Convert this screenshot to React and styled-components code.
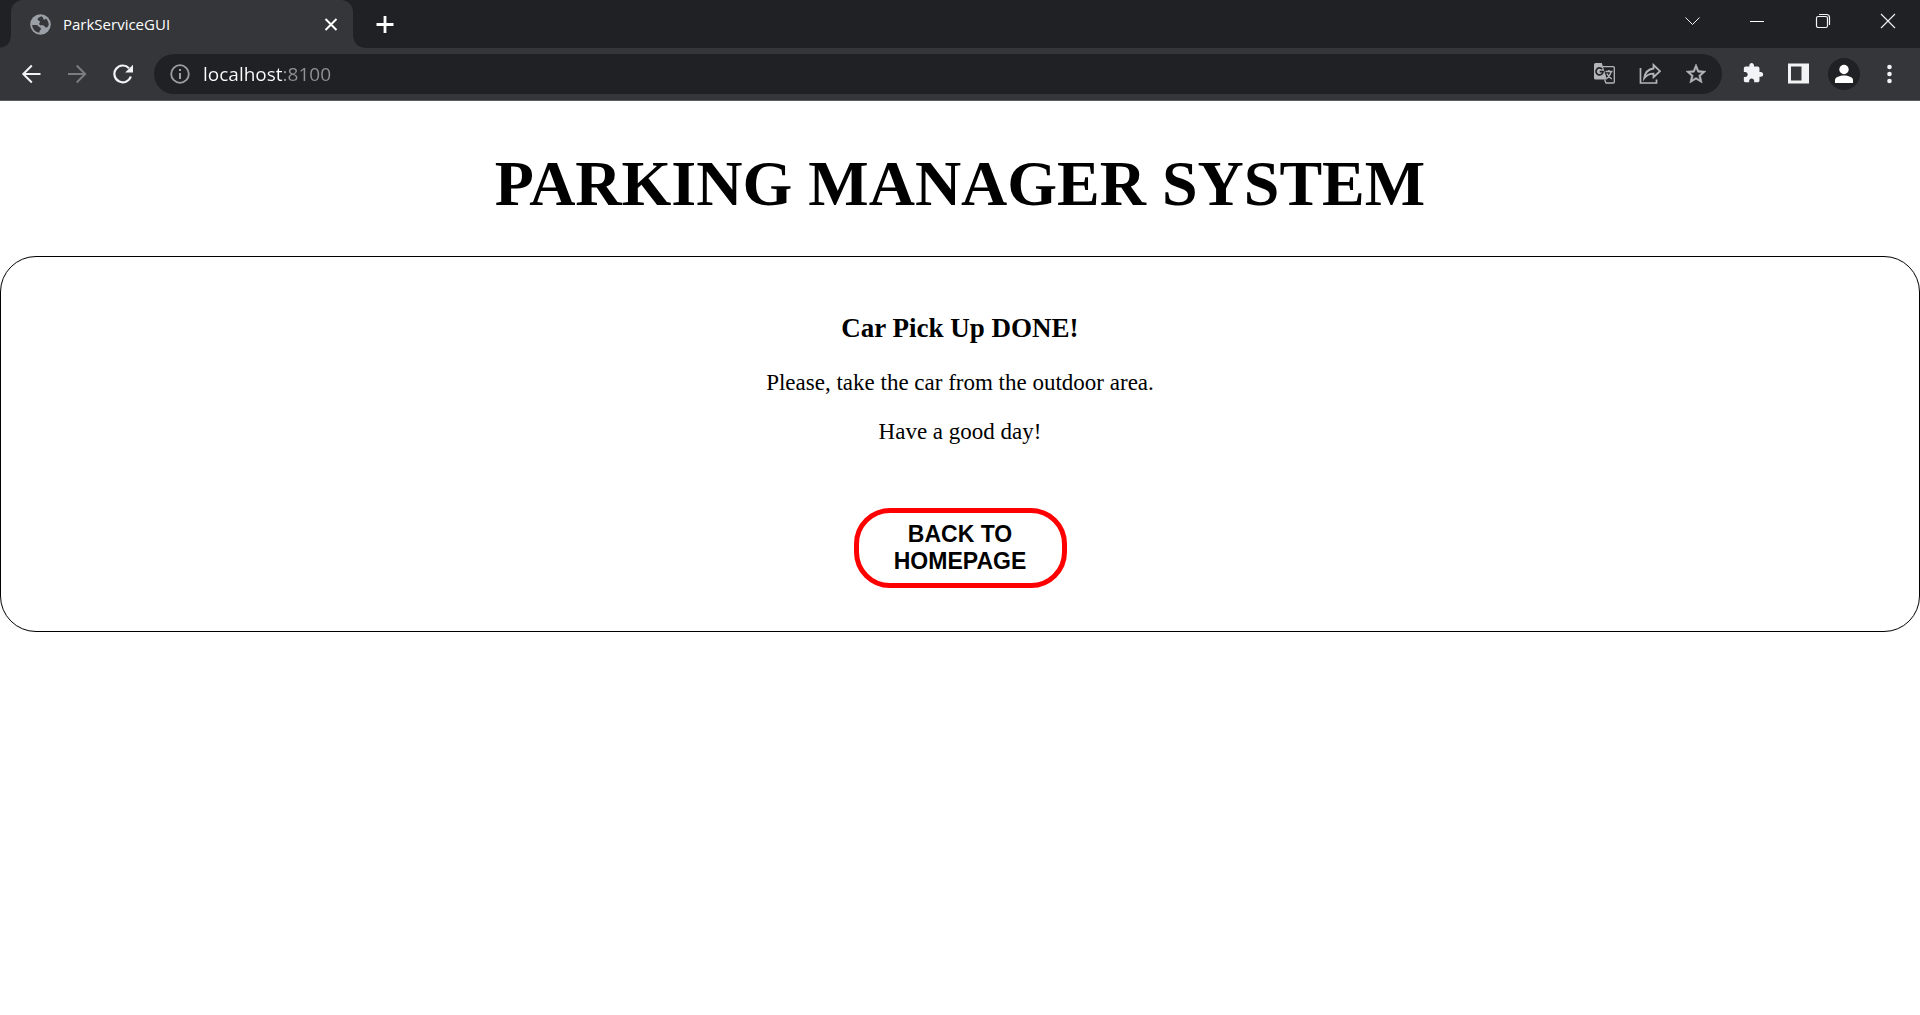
import React from "react";
import styled, { createGlobalStyle } from "styled-components";

const GlobalStyle = createGlobalStyle`
  *, *::before, *::after { box-sizing: border-box; }
  body { margin: 0; background: #fff; color: #000; font-family: "Liberation Serif", "Times New Roman", serif; }
  button, input { font: inherit; color: inherit; margin: 0; padding: 0; border: 0; background: none; }
`;

const chromeFont = `"Open Sans", "Segoe UI", sans-serif`;

const TabStrip = styled.header`
  display: flex;
  align-items: stretch;
  height: 48px;
  padding-left: 11px;
  background: #202124;
  font-family: ${chromeFont};
`;

const Tab = styled.div`
  position: relative;
  display: flex;
  align-items: center;
  width: 342px;
  padding: 0 12px 0 19px;
  gap: 12px;
  border-radius: 12px 12px 0 0;
  background: #35363a;
  color: #fff;

  &::before, &::after {
    content: "";
    position: absolute;
    bottom: 0;
    width: 11px;
    height: 11px;
  }
  &::before {
    right: 100%;
    background: radial-gradient(circle at 0 0, transparent 10px, #35363a 11px);
  }
  &::after {
    left: 100%;
    background: radial-gradient(circle at 100% 0, transparent 10px, #35363a 11px);
  }
`;

const TabTitle = styled.span`
  flex: 1;
  font-size: 15px;
  line-height: 20px;
`;

const IconButton = styled.button`
  display: flex;
  align-items: center;
  justify-content: center;
  flex: none;
  width: ${(p) => p.$width}px;
  height: ${(p) => p.$height || 40}px;
  color: ${(p) => p.$color || "#f1f3f4"};
`;

const WindowControls = styled.div`
  display: flex;
  margin-left: auto;
`;

const Toolbar = styled.nav`
  display: flex;
  align-items: center;
  height: 53px;
  padding: 0 9px 1px 8px;
  border-bottom: 1px solid #5b5c5f;
  background: #35363a;
  font-family: ${chromeFont};
`;

const AddressBar = styled.div`
  display: flex;
  align-items: center;
  flex: 1;
  height: 40px;
  margin: 0 9px 0 8px;
  padding: 0 3px;
  border-radius: 20px;
  background: #202124;
`;

const AddressInput = styled.input`
  flex: 1;
  min-width: 0;
  height: 40px;
  font-size: 19px;
  color: #fff;
  outline: 0;
  background: linear-gradient(to right, #fff 80px, #8f9296 80px);
  background-clip: text;
  -webkit-text-fill-color: transparent;
`;

const Avatar = styled.span`
  display: flex;
  align-items: center;
  justify-content: center;
  width: 32px;
  height: 32px;
  border-radius: 50%;
  background: #202124;
`;

const Title = styled.h1`
  margin: 0;
  padding: 46px 0 35px;
  font-size: 64px;
  line-height: 74px;
  text-align: center;
`;

const Card = styled.main`
  display: flex;
  flex-direction: column;
  align-items: center;
  padding: 56px 0 43px;
  border: 1px solid #000;
  border-radius: 36px;
  text-align: center;
`;

const Heading = styled.h2`
  margin: 0 0 26px;
  font-size: 27px;
  line-height: 31px;
`;

const Message = styled.p`
  margin: 0 0 23px;
  font-size: 23px;
  line-height: 26px;
`;

const HomeButton = styled.button`
  width: 213px;
  margin-top: 40px;
  padding: 8px 24px;
  border: 5px solid #f00;
  border-radius: 36px;
  background: #fff;
  font-family: "Liberation Sans", Arial, sans-serif;
  font-size: 23px;
  font-weight: 700;
  line-height: 27px;
`;

const Icon = ({ size, box = 24, children }) => (
  <svg width={size} height={size} viewBox={`0 0 ${box} ${box}`} fill="none" aria-hidden="true">
    {children}
  </svg>
);

const Globe = () => (
  <Icon size={21} box={21}>
    <circle cx="10.5" cy="10.5" r="10.3" fill="#9aa0a6" />
    <path d="M11.5 2.2C9.3 3 7.3 4.2 7.6 5.6C7.9 6.9 9.7 6.4 9.9 7.7C10.1 9 8.7 9.4 9.3 10.6C10 11.8 12.3 10.9 13.6 11.4C15 12 14.7 13.4 16 13.6C17.2 13.8 18 12.6 18.7 11C18.8 8.6 17.7 6.4 16 4.6C15.2 5.7 14 6 13.5 5.2C13 4.3 13.3 3 11.5 2.2Z" fill="#35363a" />
    <path d="M2.2 10.8C2.2 14.9 5 18 9.2 18.8C9.7 17.8 9.5 16.9 10.4 16.1C11.4 15.1 11.1 13.6 9.7 13.3C8.3 13 8.3 11.6 6.7 11.1C5.3 10.7 3.7 11.3 2.2 10.8Z" fill="#35363a" />
  </Icon>
);

export default function App() {
  return (
    <>
      <GlobalStyle />
      <TabStrip>
        <Tab>
          <Globe />
          <TabTitle>ParkServiceGUI</TabTitle>
          <IconButton $width={20} $height={20} $color="#fff" aria-label="Close tab">
            <Icon size={20} box={20}><path d="M4.5 5 15.5 16M15.5 5 4.5 16" stroke="currentColor" strokeWidth="2" /></Icon>
          </IconButton>
        </Tab>
        <IconButton $width={64} $height={48} $color="#fff" aria-label="New tab">
          <Icon size={20} box={20}><path d="M10 2V19M1.5 10.5H18.5" stroke="currentColor" strokeWidth="2.8" /></Icon>
        </IconButton>
        <WindowControls>
          <IconButton $width={65} $height={42} aria-label="Search tabs">
            <Icon size={16} box={16}><path d="M.5 4.5 7.5 11.5 14.5 4.5" stroke="currentColor" /></Icon>
          </IconButton>
          <IconButton $width={65} $height={42} aria-label="Minimize">
            <Icon size={16} box={16}><path d="M0 8.5H14" stroke="#fff" /></Icon>
          </IconButton>
          <IconButton $width={65} $height={42} aria-label="Restore">
            <Icon size={16} box={16}>
              <rect x="1.5" y="3.5" width="11" height="11" rx="1.8" stroke="currentColor" strokeWidth="1.2" />
              <path d="M4 1.5H11.5Q14.5 1.5 14.5 4.5V12" stroke="currentColor" strokeWidth="1.2" />
            </Icon>
          </IconButton>
          <IconButton $width={65} $height={42} aria-label="Close window">
            <Icon size={16} box={16}><path d="M1 1 15 15M15 1 1 15" stroke="currentColor" strokeWidth="1.1" /></Icon>
          </IconButton>
        </WindowControls>
      </TabStrip>
      <Toolbar aria-label="Browser">
        <IconButton $width={46} aria-label="Back">
          <Icon size={20} box={20}><path d="M19.5 10H2.5M10.8 1.5 2.3 10 10.8 18.5" stroke="currentColor" strokeWidth="2" /></Icon>
        </IconButton>
        <IconButton $width={46} $color="#7b7c7f" aria-label="Forward">
          <Icon size={20} box={20}><path d="M1 10H18M9.7 1.5 18.2 10 9.7 18.5" stroke="currentColor" strokeWidth="2" /></Icon>
        </IconButton>
        <IconButton $width={46} aria-label="Reload">
          <Icon size={20} box={20}>
            <path d="M17.8 12.5A8.4 8.4 0 1 1 16 4.2" stroke="currentColor" strokeWidth="2.2" />
            <path d="M20 .8V8.5H12.2Z" fill="currentColor" />
          </Icon>
        </IconButton>
        <AddressBar>
          <IconButton $width={46} $color="#9aa0a6" aria-label="View site information">
            <Icon size={20} box={20}>
              <circle cx="10" cy="10" r="8.8" stroke="currentColor" strokeWidth="1.8" />
              <path d="M10 5V7M10 9V15" stroke="currentColor" strokeWidth="2" />
            </Icon>
          </IconButton>
          <AddressInput type="text" aria-label="Address" defaultValue="localhost:8100" />
          <IconButton $width={46} $color="#b4b5b7" aria-label="Translate this page">
            <Icon size={21} box={21}>
              <path d="M9 3.6H19.2Q20.3 3.6 20.3 4.7V18.9Q20.3 20 19.2 20H12L10.5 16.5" stroke="currentColor" strokeWidth="1.3" />
              <path d="M1.5 0H7.8L13 16.5H1.5Q0 16.5 0 15V1.5Q0 0 1.5 0Z" fill="currentColor" />
              <path d="M8.2 6.2A3.5 3.5 0 1 0 9 8.7H5.7" stroke="#202124" strokeWidth="1.7" />
              <path d="M11.5 8.5H18.5M14.8 7V8.5M17.3 8.5Q16 13 12.8 15.5M12.8 10.5Q14.5 14 17.8 16" stroke="currentColor" strokeWidth="1.4" />
            </Icon>
          </IconButton>
          <IconButton $width={46} $color="#b4b5b7" aria-label="Share this page">
            <Icon size={22} box={22}>
              <path d="M1.5 5V20H17.5V16.5" stroke="currentColor" strokeWidth="1.7" />
              <path d="M14.5 2 21 8.2 14.5 14.2V10.6C10 10.6 7.5 12.2 5.2 15.2C5.9 10.5 8.5 6.2 14.5 5.5Z" stroke="currentColor" strokeWidth="1.8" />
            </Icon>
          </IconButton>
          <IconButton $width={46} $color="#b4b5b7" aria-label="Bookmark this page">
            <Icon size={24}><path fill="currentColor" stroke="currentColor" strokeWidth=".5" d="M22 9.24l-7.19-.62L12 2 9.19 8.63 2 9.24l5.46 4.73L5.82 21 12 17.27 18.18 21l-1.63-7.03L22 9.24zM12 15.4l-3.76 2.27 1-4.28-3.32-2.88 4.38-.38L12 6.1l1.71 4.04 4.38.38-3.32 2.88 1 4.28L12 15.4z" /></Icon>
          </IconButton>
        </AddressBar>
        <IconButton $width={45} aria-label="Extensions">
          <Icon size={23} box={25}><path fill="currentColor" d="M20.5 11H19V7c0-1.1-.9-2-2-2h-4V3.5C13 2.12 11.88 1 10.5 1S8 2.12 8 3.5V5H4c-1.1 0-1.99.9-1.99 2v3.8H3.5c1.49 0 2.7 1.21 2.7 2.7s-1.21 2.7-2.7 2.7H2V20c0 1.1.9 2 2 2h3.8v-1.5c0-1.49 1.21-2.7 2.7-2.7 1.49 0 2.7 1.21 2.7 2.7V22H17c1.1 0 2-.9 2-2v-4h1.5c1.38 0 2.5-1.12 2.5-2.5S21.88 11 20.5 11z" /></Icon>
        </IconButton>
        <IconButton $width={45} aria-label="Side panel">
          <Icon size={21} box={21}><path fill="currentColor" fillRule="evenodd" d="M0 .5H21V20.5H0ZM3 3.5V17.5H13.5V3.5Z" /></Icon>
        </IconButton>
        <IconButton $width={45} $color="#fff" aria-label="Profile">
          <Avatar>
            <Icon size={20} box={20}><circle cx="10" cy="5.5" r="4.7" fill="currentColor" /><path d="M1 19V16C1 13 6 11.5 10 11.5S19 13 19 16V19Z" fill="currentColor" /></Icon>
          </Avatar>
        </IconButton>
        <IconButton $width={45} aria-label="Menu">
          <Icon size={20} box={20}><g fill="currentColor"><circle cx="10.5" cy="3" r="2.3" /><circle cx="10.5" cy="10" r="2.3" /><circle cx="10.5" cy="17" r="2.3" /></g></Icon>
        </IconButton>
      </Toolbar>
      <Title>PARKING MANAGER SYSTEM</Title>
      <Card>
        <Heading>Car Pick Up DONE!</Heading>
        <Message>Please, take the car from the outdoor area.</Message>
        <Message>Have a good day!</Message>
        <HomeButton>BACK TO HOMEPAGE</HomeButton>
      </Card>
    </>
  );
}
